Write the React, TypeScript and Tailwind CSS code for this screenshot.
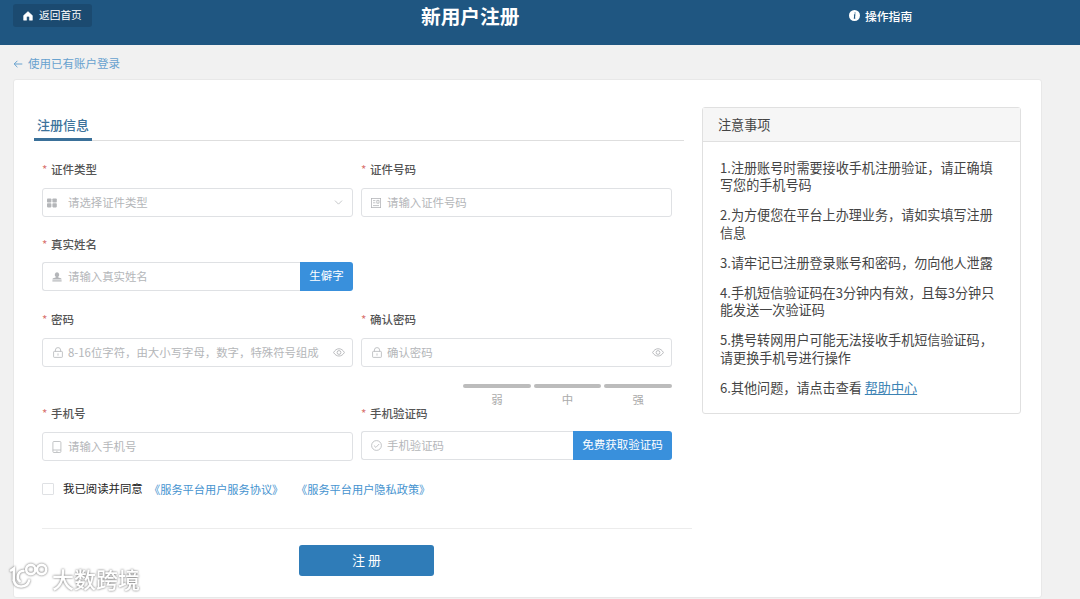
import type { ReactNode } from 'react';
import { ChevronDown } from 'lucide-react';

const notices = [
    '1.注册账号时需要接收手机注册验证\uff0c请正确填写您的手机号码',
    '2.为方便您在平台上办理业务\uff0c请如实填写注册信息',
    '3.请牢记已注册登录账号和密码\uff0c勿向他人泄露',
    '4.手机短信验证码在3分钟内有效\uff0c且每3分钟只能发送一次验证码',
    '5.携号转网用户可能无法接收手机短信验证码\uff0c请更换手机号进行操作',
];

const passwordHint = '8-16位字符\uff0c由大小写字母\uff0c数字\uff0c特殊符号组成';

const strengthLevels = ['弱', '中', '强'];

function HomeIcon() {
    return (
        <svg viewBox="0 0 10 10" className="w-[10px] h-[10px] shrink-0" fill="currentColor">
            <path d="M5 .6 9.4 4.6V9.2H6.4V6.6a1.4 1.4 0 0 0-2.8 0v2.6H.6V4.6Z" stroke="currentColor" strokeWidth=".5" strokeLinejoin="round" />
        </svg>
    );
}

function BackIcon() {
    return (
        <svg viewBox="0 0 10 10" className="w-[10px] h-[10px] shrink-0" fill="none" stroke="currentColor" strokeWidth="1">
            <path d="M9.3 5H1.2M4.4 1.8 1.2 5l3.2 3.2" />
        </svg>
    );
}

function InfoIcon() {
    return (
        <svg viewBox="0 0 10 10" className="w-[11px] h-[11px] shrink-0">
            <circle cx="5" cy="5" r="5" fill="currentColor" />
            <path d="M5.5 2.3v.9M4.5 4.4h.8L4.9 7.4h.8" fill="none" stroke="#1f5681" strokeWidth="1" />
        </svg>
    );
}

function GridIcon() {
    return (
        <svg viewBox="0 0 10 10" className="w-[10px] h-[10px]" fill="currentColor">
            <rect x="0" y=".4" width="4.4" height="4.1" rx=".8" />
            <rect x="5.4" y=".4" width="4.4" height="4.1" rx=".8" />
            <rect x="0" y="5.3" width="4.4" height="4.1" rx=".8" />
            <rect x="5.4" y="5.3" width="4.4" height="4.1" rx=".8" />
        </svg>
    );
}

function CardIcon() {
    return (
        <svg viewBox="0 0 10 10" className="w-[10px] h-[10px]" fill="none" stroke="currentColor" strokeWidth=".8">
            <rect x=".4" y=".4" width="9.2" height="9.2" />
            <path d="M2 2.6h2.4M2 4.8h2.4M2 7.6h6M5.8 2.4h2.2v2.8H5.8z" />
        </svg>
    );
}

function UserIcon() {
    return (
        <svg viewBox="0 0 10 10" className="w-[10px] h-[10px]" fill="currentColor">
            <path d="M5 .3a2.3 2.5 0 0 1 1.3 4.5v.6l2.6.9q.7.3.7 1.3H.4q0-1 .7-1.3l2.6-.9v-.6A2.3 2.5 0 0 1 5 .3Z" />
            <path d="M.4 8.3h9.2v1.2H.4z" />
        </svg>
    );
}

function LockIcon() {
    return (
        <svg viewBox="0 0 10 11" className="w-[10px] h-[11px]" fill="none" stroke="currentColor" strokeWidth=".8">
            <rect x=".6" y="4.4" width="8.8" height="6" rx=".7" />
            <path d="M2.4 4.4V3a2.6 2.4 0 0 1 5.2 0v1.4M5 6.4v2.2" />
        </svg>
    );
}

function PhoneIcon() {
    return (
        <svg viewBox="0 0 10 12" className="w-[10px] h-[12px]" fill="none" stroke="currentColor" strokeWidth=".8">
            <rect x=".9" y=".5" width="8" height="11" rx="1" />
            <path d="M.9 9h8M4.3 10.3h1.2" />
        </svg>
    );
}

function CheckIcon() {
    return (
        <svg viewBox="0 0 11 11" className="w-[11px] h-[11px]" fill="none" stroke="currentColor" strokeWidth=".8">
            <circle cx="5.5" cy="5.5" r="4.9" />
            <path d="m2.9 5.5 2 1.9 3.3-3.4" />
        </svg>
    );
}

function EyeIcon() {
    return (
        <svg viewBox="0 0 12 9" className="w-[12px] h-[9px]" fill="none" stroke="currentColor" strokeWidth=".9">
            <path d="M.6 4.5C3.2-.5 8.8-.5 11.4 4.5 8.8 9.2 3.2 9.2.6 4.5Z" />
            <circle cx="6" cy="4.5" r="1.9" />
        </svg>
    );
}

type FieldProps = {
    label: string;
    placeholder: string;
    icon: ReactNode;
    iconClass?: string;
    suffix?: ReactNode;
    action?: string;
    actionClass?: string;
    boxClass?: string;
};

function Field({ label, placeholder, icon, iconClass = 'pl-[9px]', suffix, action, actionClass = '', boxClass = 'mt-[6px]' }: FieldProps) {
    return (
        <div>
            <label className="flex items-center h-6 text-[11.5px] font-medium text-[#555]">
                <span className="w-[9px] text-[#d9736f] font-normal">*</span>
                {label}
            </label>
            <div className={`flex h-[29px] ${boxClass}`}>
                <div className={`flex flex-1 min-w-0 items-center border border-[#dfe1e4] bg-white text-[#b4b6b9] ${action ? 'rounded-l-[3px] border-r-0' : 'rounded-[3px]'}`}>
                    <span className={`flex w-[25px] shrink-0 items-center ${iconClass}`}>{icon}</span>
                    <input
                        placeholder={placeholder}
                        className="flex-1 min-w-0 h-full bg-transparent pb-[2px] text-[11.4px] outline-none placeholder:text-[#b4b6b9]"
                    />
                    {suffix && <span className="flex pr-[7px]">{suffix}</span>}
                </div>
                {action && (
                    <button className={`rounded-r-[3px] bg-[#3990dc] pb-px text-[11.5px] text-white ${actionClass}`}>{action}</button>
                )}
            </div>
        </div>
    );
}

function Watermark() {
    return (
        <div className="absolute left-[9px] top-[561px] flex items-start text-white drop-shadow-[0_0_1px_#666]">
            <svg viewBox="0 0 40 30" className="w-[40px] h-[30px]" fill="none" stroke="currentColor" strokeWidth="2.6" strokeLinecap="round">
                <path d="M2 9.5 4.8 7.5V19" />
                <path d="M14.5 9.8a6 6 0 0 0-3.8 10.4" />
                <path d="M4.8 19.5c1.2 5 4.4 6.3 8 6 4-.3 6.5-2.5 7.3-6" />
                <circle cx="21.8" cy="8.5" r="4.6" />
                <circle cx="32.6" cy="8.5" r="4.6" />
            </svg>
            <span className="ml-[3px] mt-[2px] text-[22px] leading-[30px] font-medium">大数跨境</span>
        </div>
    );
}

export default function App() {
    return (
        <div className="relative h-[599px] overflow-hidden bg-[#f1f1f1] font-['Noto_Sans_CJK_SC',sans-serif] text-[#555]">
            <header className="flex h-[45px] items-start bg-[#1f5681] text-white">
                <div className="w-[421px] pl-[13px] pt-[4px]">
                    <button className="flex h-[23px] w-[79px] items-center gap-[6px] rounded-[3px] bg-[#1b4a70] pl-[10px] text-[10.7px]">
                        <HomeIcon />
                        返回首页
                    </button>
                </div>
                <h1 className="w-[428px] pt-[1px] text-[19.7px] leading-[30px] font-bold">新用户注册</h1>
                <a className="flex items-center gap-[5px] pt-[4px] text-[11.8px] leading-[23px] font-medium">
                    <InfoIcon />
                    操作指南
                </a>
            </header>

            <a className="flex h-[34px] items-center gap-[5px] pl-[13px] pt-[3px] text-[11.5px] text-[#68a2cf]">
                <BackIcon />
                使用已有账户登录
            </a>

            <main className="ml-[13px] flex h-[519px] w-[1029px] items-start rounded-[3px] border border-[#e8e8e8] bg-white">
                <section className="w-[688px] pl-[20px]">
                    <div className="mt-[30px] flex h-[31px] w-[650px] border-b border-[#dedede]">
                        <h2 className="h-[31px] w-[58px] border-b-[3px] border-[#3a7099] pl-[3px] text-[13px] leading-[29px] font-medium text-[#3c729b]">
                            注册信息
                        </h2>
                    </div>

                    <form className="ml-[8px]">
                        <div className="mt-[17px] grid w-[630px] grid-cols-2 gap-x-2">
                            <Field label="证件类型" placeholder="请选择证件类型" icon={<GridIcon />} iconClass="pl-[4px]" suffix={<ChevronDown className="w-[13px] h-[13px]" strokeWidth={1.4} />} />
                            <Field label="证件号码" placeholder="请输入证件号码" icon={<CardIcon />} />
                        </div>
                        <div className="mt-[16px] grid w-[630px] grid-cols-2 gap-x-2">
                            <Field label="真实姓名" placeholder="请输入真实姓名" icon={<UserIcon />} action="生僻字" actionClass="w-[53px]" boxClass="mt-[5px]" />
                        </div>
                        <div className="mt-[17px] grid w-[630px] grid-cols-2 gap-x-2">
                            <Field label="密码" placeholder={passwordHint} icon={<LockIcon />} iconClass="pl-[10px]" suffix={<EyeIcon />} />
                            <Field label="确认密码" placeholder="确认密码" icon={<LockIcon />} iconClass="pl-[10px]" suffix={<EyeIcon />} />
                        </div>

                        <div className="ml-[421px] flex h-[35px] w-[209px] gap-[3px] pt-[17px]">
                            {strengthLevels.map((level) => (
                                <div key={level} className="flex-1 text-center text-[11.4px] leading-[23px] text-[#aaa]">
                                    <div className="h-[4px] rounded-full bg-[#bcbcbc]" />
                                    {level}
                                </div>
                            ))}
                        </div>

                        <div className="grid w-[630px] grid-cols-2 gap-x-2">
                            <Field label="手机号" placeholder="请输入手机号" icon={<PhoneIcon />} />
                            <Field label="手机验证码" placeholder="手机验证码" icon={<CheckIcon />} action="免费获取验证码" actionClass="w-[99px]" boxClass="mt-[5px]" />
                        </div>

                        <div className="mt-[18px] flex h-5 items-center text-[11.4px] text-[#4593cf]">
                            <span className="h-[12px] w-[12px] rounded-[1px] border border-[#dfe1e4]" />
                            <span className="ml-[9px] w-[86px] text-[#222]">我已阅读并同意</span>
                            <a className="w-[147px] text-[11.2px]">《服务平台用户服务协议》</a>
                            <a className="text-[11.2px]">《服务平台用户隐私政策》</a>
                        </div>

                        <div className="mt-[29px] h-px w-[650px] bg-[#ececec]" />
                        <button className="ml-[257px] mt-[16px] h-[31px] w-[135px] rounded-[3px] bg-[#2f7cb8] pb-px text-[13px] text-white">
                            注 册
                        </button>
                    </form>
                </section>

                <aside className="mt-[27px] h-[307px] w-[319px] rounded-[3px] border border-[#e0e0e0] text-[13.1px] text-[#444]">
                    <h3 className="h-[34px] border-b border-[#e0e0e0] bg-[#f6f6f6] pl-[15px] leading-[34px]">注意事项</h3>
                    <div className="space-y-[13px] pl-[17px] pr-[20px] pt-[17px] leading-[17.2px]">
                        {notices.map((notice) => (
                            <p key={notice}>{notice}</p>
                        ))}
                        <p>
                            {'6.其他问题\uff0c请点击查看 '}
                            <a className="text-[#3c83b4] underline">帮助中心</a>
                        </p>
                    </div>
                </aside>
            </main>

            <Watermark />
        </div>
    );
}
